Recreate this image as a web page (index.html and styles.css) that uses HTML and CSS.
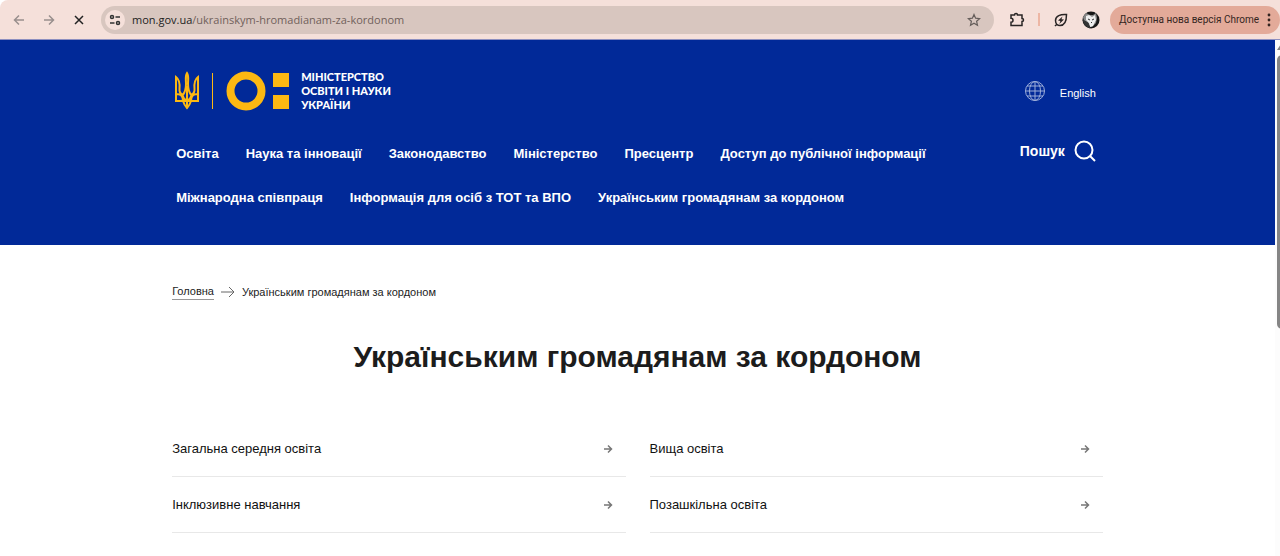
FILE: index.html
```html
<!DOCTYPE html>
<html lang="uk">
<head>
<meta charset="utf-8">
<meta name="viewport" content="width=device-width, initial-scale=1">
<title>Українським громадянам за кордоном</title>
<link rel="stylesheet" href="styles.css">
</head>
<body>
<div class="toolbar">
  <div class="nav-buttons">
    <button class="tool muted" aria-label="Назад"><svg width="12" height="12" viewBox="0 0 12 12"><path d="M11 6H1.5M6 1.5 1.5 6 6 10.5"/></svg></button>
    <button class="tool muted" aria-label="Вперед"><svg width="12" height="12" viewBox="0 0 12 12"><path d="M1 6h9.5M6 1.5 10.5 6 6 10.5"/></svg></button>
    <button class="tool stop" aria-label="Зупинити"><svg width="12" height="12" viewBox="0 0 12 12"><path d="m2 2 8 8M10 2l-8 8"/></svg></button>
  </div>
  <div class="address">
    <button class="site-info" aria-label="Інформація про сайт"><svg width="12" height="12" viewBox="0 0 12 12"><circle cx="3" cy="3" r="1.5"/><path d="M6.5 3H11M1 9h4.5"/><circle cx="9" cy="9" r="1.5"/></svg></button>
    <div class="url"><span class="host">mon.gov.ua</span>/ukrainskym-hromadianam-za-kordonom</div>
    <button class="tool star" aria-label="Закладка"><svg width="14" height="14" viewBox="0 0 14 14"><path d="m7 1.5 1.6 3.7 4 .4-3 2.7.9 4L7 10.200l-3.500 2.100.9-4-3-2.700 4-.4z"/></svg></button>
  </div>
  <div class="extensions">
    <button class="tool ext" aria-label="Розширення"><svg width="16" height="16" viewBox="0 0 16 16"><path d="M2 3h3.500a1.500 1.500 0 0 1 3 0H13v3.500a1.500 1.500 0 0 1 0 3V13.500H2v-3.300a2 2 0 0 0 0-4z"/></svg></button>
    <span class="separator"></span>
    <button class="tool ext" aria-label="Енергозбереження"><svg width="16" height="16" viewBox="0 0 16 16"><path d="M13.500 2.500C7.500 2 2.500 4 2.500 8.500c0 3 2 5 4.500 5 5 0 6.500-5 6.500-11zM3.800 12.200 2 14"/><path class="solid" d="M9.500 4.500 5 8.600l2.400.3L6.300 12 11 7.600l-2.500-.3z"/></svg></button>
    <button class="avatar" aria-label="Профіль"><svg width="18" height="18" viewBox="0 0 18 18"><circle cx="9" cy="9" r="8.500" fill="#171717"/><path d="M1 6 4 2l4 2h3l3-2 1 5-1 5-4 4-4-1-4-5z" fill="#888"/><path d="m4 5 3-1 3 2 3-2 1 5-3 6-3 1-1-4-3-3z" fill="#eee"/><path d="m1 9 5 3 2 5-5-3zM10 9l2-1M6 8l2 1M9 11l1 1" stroke="#333" fill="#333"/></svg></button>
  </div>
  <button class="update">Доступна нова версія Chrome<svg width="4" height="14" viewBox="0 0 4 14"><circle cx="2" cy="2" r="1.400"/><circle cx="2" cy="7" r="1.400"/><circle cx="2" cy="12" r="1.400"/></svg></button>
</div>
<div class="viewport">
  <div class="page">
    <header class="site-header">
      <div class="container">
        <div class="brand-row">
          <a class="brand" href="#">
            <svg class="emblem" width="26" height="40" viewBox="0 0 26 40"><path d="M2 6v24h7c1 3 2 5 4 7 2-2 3-4 4-7h7V6c-4 3-4 7-3.500 12 .3 3-1 5-3.500 6-2-3-3-6-3-11 0-5 1-8-1-11-2 3-1 6-1 11 0 5-1 8-3 11-2.500-1-3.800-3-3.500-6C6 13 6 9 2 6zM2 23c4 0 7 1 7 7M24 23c-4 0-7 1-7 7M13 15v21M9 25c0 3 3 3 4 6 1-3 4-3 4-6M9 30h8"/></svg>
            <span class="brand-line"></span>
            <svg class="mark" width="64" height="40" viewBox="0 0 64 40"><circle cx="20" cy="20" r="15.500"/><path d="M47 2h16v14H47zM47 24h16v14H47z"/></svg>
            <span class="brand-name">МІНІСТЕРСТВО<br>ОСВІТИ І НАУКИ<br>УКРАЇНИ</span>
          </a>
          <a class="language" href="#"><svg width="22" height="22" viewBox="0 0 22 22"><circle cx="11" cy="11" r="9.500"/><ellipse cx="11" cy="11" rx="5.500" ry="9.500"/><path d="M11 1.500v19M1.500 11h19M3 6h16M3 16h16"/></svg><span>English</span></a>
        </div>
        <div class="menu-row">
          <nav class="menu">
            <a href="#">Освіта</a><a href="#">Наука та інновації</a><a href="#">Законодавство</a><a href="#">Міністерство</a><a href="#">Пресцентр</a><a href="#">Доступ до публічної інформації</a><a href="#">Міжнародна співпраця</a><a href="#">Інформація для осіб з ТОТ та ВПО</a><a href="#">Українським громадянам за кордоном</a>
          </nav>
          <button class="search">Пошук<svg width="22" height="22" viewBox="0 0 22 22"><circle cx="10" cy="10" r="8.500"/><path d="m16 16 5 5"/></svg></button>
        </div>
      </div>
    </header>
    <main class="container content">
      <nav class="breadcrumbs" aria-label="Навігація"><a href="#">Головна</a><svg width="14" height="12" viewBox="0 0 14 12"><path d="M0 6h13M8 1l5 5-5 5"/></svg><span>Українським громадянам за кордоном</span></nav>
      <h1>Українським громадянам за кордоном</h1>
      <div class="topics">
        <a href="#">Загальна середня освіта<svg width="10" height="10" viewBox="0 0 10 10"><path d="M1 5h7.500M5 1.500 8.500 5 5 8.500"/></svg></a>
        <a href="#">Вища освіта<svg width="10" height="10" viewBox="0 0 10 10"><path d="M1 5h7.500M5 1.500 8.500 5 5 8.500"/></svg></a>
        <a href="#">Інклюзивне навчання<svg width="10" height="10" viewBox="0 0 10 10"><path d="M1 5h7.500M5 1.500 8.500 5 5 8.500"/></svg></a>
        <a href="#">Позашкільна освіта<svg width="10" height="10" viewBox="0 0 10 10"><path d="M1 5h7.500M5 1.500 8.500 5 5 8.500"/></svg></a>
      </div>
    </main>
  </div>
  <div class="scrollbar" aria-hidden="true"><svg width="10" height="6" viewBox="0 0 10 6"><path d="m0 6 4-6h2l4 6z"/></svg><span class="thumb"></span></div>
</div>
</body>
</html>
```

FILE: styles.css
```css
* { box-sizing: border-box; }
body {
  margin: 0;
  min-height: 100vh;
  display: flex;
  flex-direction: column;
  overflow: hidden;
  background: #fff;
  color: #1c1c1c;
  font-family: "Liberation Sans", Arial, sans-serif;
}
a { color: inherit; text-decoration: none; }
button { border: 0; padding: 0; background: none; color: inherit; font: inherit; cursor: pointer; }
svg { display: block; flex: none; fill: none; stroke: currentColor; }

.toolbar {
  height: 40px;
  display: flex;
  align-items: center;
  background: #f5e0da;
  border-bottom: 1px solid #8d8fc0;
  border-top-left-radius: 8px;
  font-family: "Open Sans", sans-serif;
}
.nav-buttons { display: flex; gap: 18px; padding: 0 16px 0 13px; }
.tool { display: grid; place-items: center; }
.tool svg { stroke-width: 1.5; }
.muted { color: #998f8d; }
.stop { color: #222; }
.address {
  flex: 1;
  height: 28px;
  display: flex;
  align-items: center;
  gap: 7px;
  padding: 0 13px 0 4px;
  border-radius: 14px;
  background: #d8c6bf;
}
.site-info {
  width: 20px;
  height: 20px;
  display: grid;
  place-items: center;
  border-radius: 50%;
  background: #f5e0da;
  color: #333;
}
.site-info svg { stroke-width: 1.5; }
.url { flex: 1; color: #71615b; font-size: 11px; }
.host { color: #222; }
.tool.star { color: #665e5b; }
.tool.star svg { stroke-width: 1.2; }
.extensions { display: flex; align-items: center; gap: 13px; padding: 0 10px 0 15px; }
.ext { color: #292525; }
.ext .solid { fill: currentColor; stroke: none; }
.separator { width: 2px; height: 13px; background: #edb6a4; }
.avatar svg { stroke: none; }
.update {
  height: 28px;
  display: flex;
  align-items: center;
  gap: 8px;
  padding: 0 9px;
  border-radius: 14px;
  background: #e3aa99;
  color: #342521;
  font-family: Roboto, sans-serif;
  font-size: 10px;
  white-space: nowrap;
}
.update svg { fill: currentColor; stroke: none; }

.viewport { flex: 1; display: flex; }
.page { flex: 1; min-width: 0; }
.container { width: 73%; margin: 0 auto; }
.site-header { padding: 30px 0 36px; background: #012998; color: #fff; }
.brand-row { display: flex; align-items: center; justify-content: space-between; padding: 0 7px 0 2px; }
.brand { display: flex; align-items: center; }
.emblem { color: #fcb812; stroke-width: 2; }
.brand-line { width: 1px; height: 36px; margin: 0 13px 0 12px; background: #fcb812; }
.mark { color: #fcb812; stroke-width: 8; }
.mark path { fill: currentColor; stroke: none; }
.brand-name { margin-left: 11px; font-family: Lato, sans-serif; font-size: 11px; font-weight: 900; line-height: 14px; }
.language { display: flex; align-items: center; gap: 14px; font-size: 11px; }
.language svg { color: #9cadd9; stroke-width: 1; }
.language span { padding-top: 4px; }
.menu-row { display: flex; justify-content: space-between; align-items: flex-start; padding: 28px 7px 0 4px; }
.menu { max-width: 770px; display: flex; flex-wrap: wrap; gap: 22px 27px; padding-top: 3px; font-size: 13px; font-weight: 700; line-height: 22px; }
.search { display: flex; align-items: center; gap: 9px; font-size: 14px; font-weight: 700; line-height: 16px; }
.search svg { stroke-width: 2; }

.content { padding-top: 38px; }
.breadcrumbs { display: flex; align-items: center; gap: 7px; font-size: 11px; line-height: 16px; }
.breadcrumbs a { border-bottom: 1px solid #989898; }
.breadcrumbs svg { color: #666; }
h1 { margin: 37px 0 44px; text-align: center; font-size: 30px; line-height: 40px; }
.topics { display: grid; grid-template-columns: 1fr 1fr; column-gap: 24px; }
.topics a {
  height: 56px;
  display: flex;
  align-items: center;
  justify-content: space-between;
  padding-right: 13px;
  border-bottom: 1px solid #e8e8e8;
  color: #111;
  font-size: 13px;
}
.topics svg { color: #777; stroke-width: 1.5; }

.scrollbar { width: 5px; flex: none; display: flex; flex-direction: column; gap: 5px; padding: 4px 0 0 2px; overflow: hidden; background: #fcfcfc; }
.scrollbar svg { fill: #858585; stroke: none; }
.thumb { width: 10px; height: 274px; border-radius: 5px; background: #858585; }
```
